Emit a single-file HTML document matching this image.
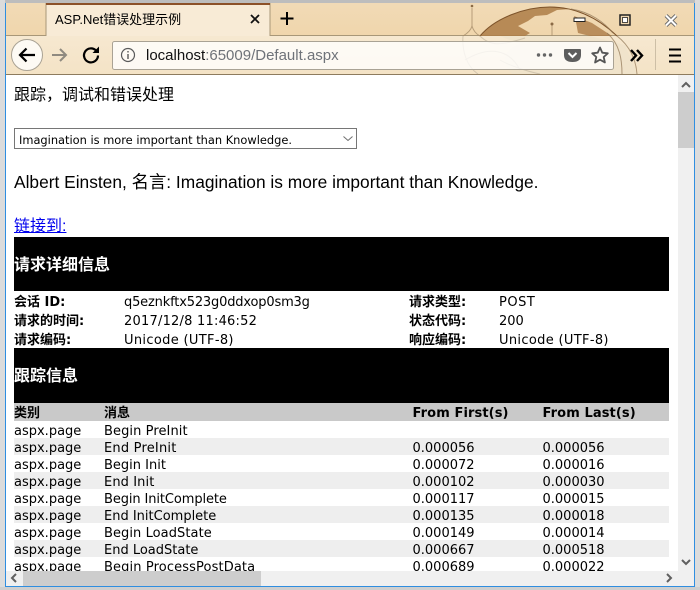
<!DOCTYPE html>
<html><head><meta charset="utf-8"><style>
html,body{margin:0;padding:0;width:700px;height:590px;overflow:hidden;background:#fff}
.a{position:absolute;white-space:nowrap}
.v{font-family:"DejaVu Sans","Noto Sans CJK SC",sans-serif;font-size:13px;line-height:17px;color:#000}
.b{font-weight:bold}
.s{font-family:"Liberation Sans","Noto Sans CJK SC",sans-serif;color:#000}
.r{position:absolute;left:14px;width:655px;height:17px}
</style></head><body>
<div class="a" style="left:0;top:0;width:700px;height:590px;background:#fff;overflow:hidden">
<div class="a" style="left:0;top:0;width:700px;height:3px;background:#bdbdbd"></div>
<div class="a" style="left:0;top:0;width:5px;height:590px;background:#dcdcdc"></div>
<div class="a" style="left:695px;top:0;width:5px;height:590px;background:#dcdcdc"></div>
<div class="a" style="left:0;top:587px;width:700px;height:3px;background:#cfcfcf"></div>
<div class="a" style="left:5px;top:3px;width:690px;height:584px;border:1px solid #2f8ee0;box-sizing:border-box;background:#fff"></div>

<div class="a" style="left:6px;top:3px;width:688px;height:33px;background:linear-gradient(#f1dab6,#f0d6ac)"></div>
<div class="a" style="left:6px;top:36px;width:688px;height:38px;background:linear-gradient(#f6e8d0,#f4e3c6)"></div>
<div class="a" style="left:6px;top:35px;width:40px;height:1px;background:#a89778"></div>
<div class="a" style="left:270px;top:35px;width:424px;height:1px;background:#a89778"></div>
<div class="a" style="left:6px;top:74px;width:688px;height:1px;background:#8d7b5e"></div>

<svg class="a" style="left:6px;top:3px" width="688" height="71" viewBox="6 3 688 71">
<path d="M512 74C500 62 505 48 520 44L500 36H590L625 45L637 74Z" fill="#efe2cb" opacity=".8"/>
<path d="M480 36C495 18 525 7 550 7C557 7 565 8 571 9L557 10L547 15L535 16L528 21L518 26L530 33L525 36Z" fill="#ad7c47" opacity=".85"/>
<path d="M574 16L592 23L612 36H590L578 33L576 22Z" fill="#ad7c47" opacity=".8"/>
<path d="M480 36C495 18 525 7 550 7C575 7 597 17 617 36" fill="none" stroke="#7d532a" stroke-width="1"/>
<path d="M571 9C590 12 604 22 613 33M617 36C630 46 636 60 637 74M607 33C620 44 622 60 622 74" fill="none" stroke="#8d7453" stroke-width="1" opacity=".7"/>
<path d="M472 8V26M552 25V36" stroke="#a88e6b" stroke-width="1" opacity=".8"/>
<path d="M463 36C468 33 471 30 472 26C473 30 476 34 480 36" fill="none" stroke="#a88e6b" opacity=".8"/>
<circle cx="472" cy="6" r="1.300" fill="#8a6a45"/><circle cx="552" cy="24" r="1.500" fill="#8a6a45"/>
<path d="M463 36C462 50 466 66 478 74M480 36C490 46 500 46 525 38M465 60C490 45 510 50 520 70M500 60C510 66 530 72 540 74" fill="none" stroke="#c9bda6" stroke-width="1" opacity=".8"/>
<rect x="46" y="3" width="224" height="33" fill="#f8ebd6"/>
<path d="M46 3V36M270 3V36" stroke="#a89778" stroke-width="1" fill="none"/>
<rect x="46" y="3" width="224" height="2" fill="#8c5128"/>
<path d="M251 15L259 23M259 15L251 23" stroke="#111" stroke-width="1.800"/>
<path d="M287 12V25M280.500 18.500H293.500" stroke="#000" stroke-width="2"/>
<circle cx="27" cy="55" r="15.500" fill="#fdfaf4" stroke="#a9a294" stroke-width="1"/>
<path d="M35 55H20M26.500 48.500L20 55L26.500 61.500" fill="none" stroke="#000" stroke-width="2.200"/>
<path d="M66 55H52M60 49L66 55L60 61" fill="none" stroke="#8f8a80" stroke-width="2"/>
<path d="M98 55.500A7 7 0 1 1 96 50.500" fill="none" stroke="#000" stroke-width="2.200"/>
<path d="M99 46.500V53H92.500Z" fill="#000"/>
<rect x="112.500" y="41.500" width="501" height="28" rx="2" fill="#fff" fill-opacity=".78" stroke="#a9a294"/>
<circle cx="128" cy="55" r="6.500" fill="none" stroke="#5a5a5a" stroke-width="1.200"/>
<path d="M128 54V59M128 51V52.500" stroke="#5a5a5a" stroke-width="1.400"/>
<circle cx="538.500" cy="55" r="1.700" fill="#666"/><circle cx="544.500" cy="55" r="1.700" fill="#666"/><circle cx="550.500" cy="55" r="1.700" fill="#666"/>
<path d="M565 49H580Q581 49 581 50V55Q581 62 572.500 62Q564 62 564 55V50Q564 49 565 49Z" fill="#5d5d5d"/>
<path d="M568.500 53L572.500 57L576.500 53" fill="none" stroke="#fff" stroke-width="2"/>
<path d="M600 47.500L602.300 52.700L607.800 53.300L603.700 57L604.900 62.500L600 59.700L595.100 62.500L596.300 57L592.200 53.300L597.700 52.700Z" fill="none" stroke="#555" stroke-width="1.800" stroke-linejoin="round"/>
<path d="M631 50L636 55.500L631 61M637 50L642 55.500L637 61" fill="none" stroke="#000" stroke-width="2.400"/>
<path d="M655.500 39V70" stroke="#cdbfa6"/>
<path d="M669 49.500H681M669 55.500H681M669 61.500H681" stroke="#000" stroke-width="2"/>
<rect x="574" y="18" width="11" height="3.500" fill="#fff" stroke="#222" stroke-width="1"/>
<rect x="620" y="15" width="10" height="10" fill="none" stroke="#222" stroke-width="1.500"/>
<rect x="622.500" y="17.500" width="5" height="5" fill="#fff" stroke="#222" stroke-width=".8"/>
<path d="M666 15.500L676 25.500M676 15.500L666 25.500" stroke="#666" stroke-width="4"/>
<path d="M666 15.500L676 25.500M676 15.500L666 25.500" stroke="#fff" stroke-width="2"/>
</svg>

<div class="a s" style="left:55px;top:11px;font-size:13px;line-height:17px">ASP.Net错误处理示例</div>
<div class="a s" style="left:146px;top:47px;font-size:15px;line-height:18px;color:#111">localhost<span style="color:#6f7379">:65009/Default.aspx</span></div>

<div class="a" style="left:6px;top:75px;width:672px;height:496px;overflow:hidden;background:#fff">
<div style="position:absolute;left:-6px;top:-75px;width:678px;height:571px;overflow:hidden">
<div class="a s" style="left:14px;top:86px;font-size:16px;line-height:20px">跟踪，调试和错误处理</div>
<div class="a" style="left:14px;top:128px;width:343px;height:21px;box-sizing:border-box;border:1px solid #767676;background:#fff"></div>
<div class="a" style="left:19px;top:132px;font-family:'DejaVu Sans',sans-serif;font-size:11.400px;line-height:16px;color:#000">Imagination is more important than Knowledge.</div>
<svg class="a" style="left:342px;top:135px" width="12" height="8"><path d="M1.500 1.500L6 5.500L10.500 1.500" fill="none" stroke="#6e6e6e" stroke-width="1"/></svg>
<div class="a s" style="left:14px;top:171px;font-size:17.350px;line-height:22px">Albert Einsten, 名言: Imagination is more important than Knowledge.</div>
<div class="a s" style="left:14px;top:218px;font-size:16px;line-height:18px;color:#00e;text-decoration:underline">链接到:</div>

<div class="a" style="left:14px;top:237px;width:655px;height:54px;background:#000"></div>
<div class="a s b" style="left:14px;top:255px;font-size:16px;line-height:22px;color:#fff">请求详细信息</div>
<div class="a v b" style="left:14px;top:294px">会话 ID:</div><div class="a v" style="left:124px;top:294px;letter-spacing:-.17px">q5eznkftx523g0ddxop0sm3g</div>
<div class="a v b" style="left:409px;top:294px">请求类型:</div><div class="a v" style="left:499px;top:294px;letter-spacing:.5px">POST</div>
<div class="a v b" style="left:14px;top:313px">请求的时间:</div><div class="a v" style="left:124px;top:313px;letter-spacing:.22px">2017/12/8 11:46:52</div>
<div class="a v b" style="left:409px;top:313px">状态代码:</div><div class="a v" style="left:499px;top:313px">200</div>
<div class="a v b" style="left:14px;top:332px">请求编码:</div><div class="a v" style="left:124px;top:332px;letter-spacing:.33px">Unicode (UTF-8)</div>
<div class="a v b" style="left:409px;top:332px">响应编码:</div><div class="a v" style="left:499px;top:332px;letter-spacing:.33px">Unicode (UTF-8)</div>

<div class="a" style="left:14px;top:348px;width:655px;height:55px;background:#000"></div>
<div class="a s b" style="left:14px;top:366px;font-size:16px;line-height:22px;color:#fff">跟踪信息</div>

<div class="r" style="top:403px;height:18px;background:#c9c9c9"></div>
<div class="a v b" style="left:14px;top:405px">类别</div><div class="a v b" style="left:104px;top:405px">消息</div>
<div class="a v b" style="left:412.500px;top:405px;letter-spacing:.1px">From First(s)</div><div class="a v b" style="left:542.500px;top:405px;letter-spacing:.1px">From Last(s)</div>

<div class="r" style="top:438px;background:#eee"></div>
<div class="r" style="top:472px;background:#eee"></div>
<div class="r" style="top:506px;background:#eee"></div>
<div class="r" style="top:540px;background:#eee"></div>

<div class="a v" style="left:14px;top:423px">aspx.page</div><div class="a v" style="left:104px;top:423px;letter-spacing:.08px">Begin PreInit</div>
<div class="a v" style="left:14px;top:440px">aspx.page</div><div class="a v" style="left:104px;top:440px;letter-spacing:.2px">End PreInit</div><div class="a v" style="left:412.500px;top:440px">0.000056</div><div class="a v" style="left:542.500px;top:440px">0.000056</div>
<div class="a v" style="left:14px;top:457px">aspx.page</div><div class="a v" style="left:104px;top:457px">Begin Init</div><div class="a v" style="left:412.500px;top:457px">0.000072</div><div class="a v" style="left:542.500px;top:457px">0.000016</div>
<div class="a v" style="left:14px;top:474px">aspx.page</div><div class="a v" style="left:104px;top:474px;letter-spacing:.1px">End Init</div><div class="a v" style="left:412.500px;top:474px">0.000102</div><div class="a v" style="left:542.500px;top:474px">0.000030</div>
<div class="a v" style="left:14px;top:491px">aspx.page</div><div class="a v" style="left:104px;top:491px;letter-spacing:-.1px">Begin InitComplete</div><div class="a v" style="left:412.500px;top:491px">0.000117</div><div class="a v" style="left:542.500px;top:491px">0.000015</div>
<div class="a v" style="left:14px;top:508px">aspx.page</div><div class="a v" style="left:104px;top:508px">End InitComplete</div><div class="a v" style="left:412.500px;top:508px">0.000135</div><div class="a v" style="left:542.500px;top:508px">0.000018</div>
<div class="a v" style="left:14px;top:525px">aspx.page</div><div class="a v" style="left:104px;top:525px;letter-spacing:.07px">Begin LoadState</div><div class="a v" style="left:412.500px;top:525px">0.000149</div><div class="a v" style="left:542.500px;top:525px">0.000014</div>
<div class="a v" style="left:14px;top:542px">aspx.page</div><div class="a v" style="left:104px;top:542px">End LoadState</div><div class="a v" style="left:412.500px;top:542px">0.000667</div><div class="a v" style="left:542.500px;top:542px">0.000518</div>
<div class="a v" style="left:14px;top:559px">aspx.page</div><div class="a v" style="left:104px;top:559px;letter-spacing:.12px">Begin ProcessPostData</div><div class="a v" style="left:412.500px;top:559px">0.000689</div><div class="a v" style="left:542.500px;top:559px">0.000022</div>
</div></div>

<div class="a" style="left:678px;top:75px;width:16px;height:496px;background:#f0f0f0"></div>
<div class="a" style="left:678px;top:92px;width:16px;height:56px;background:#cdcdcd"></div>
<div class="a" style="left:6px;top:571px;width:688px;height:15px;background:#f0f0f0"></div>
<div class="a" style="left:23px;top:571px;width:238px;height:15px;background:#cdcdcd"></div>
<svg class="a" style="left:0;top:0" width="700" height="590">
<path d="M682 87L686 83L690 87" fill="none" stroke="#606060" stroke-width="2"/>
<path d="M682 560L686 564L690 560" fill="none" stroke="#606060" stroke-width="2"/>
<path d="M16 574L12 578L16 582" fill="none" stroke="#606060" stroke-width="2"/>
<path d="M667 574L671 578L667 582" fill="none" stroke="#606060" stroke-width="2"/>
</svg>
</div>
</body></html>
